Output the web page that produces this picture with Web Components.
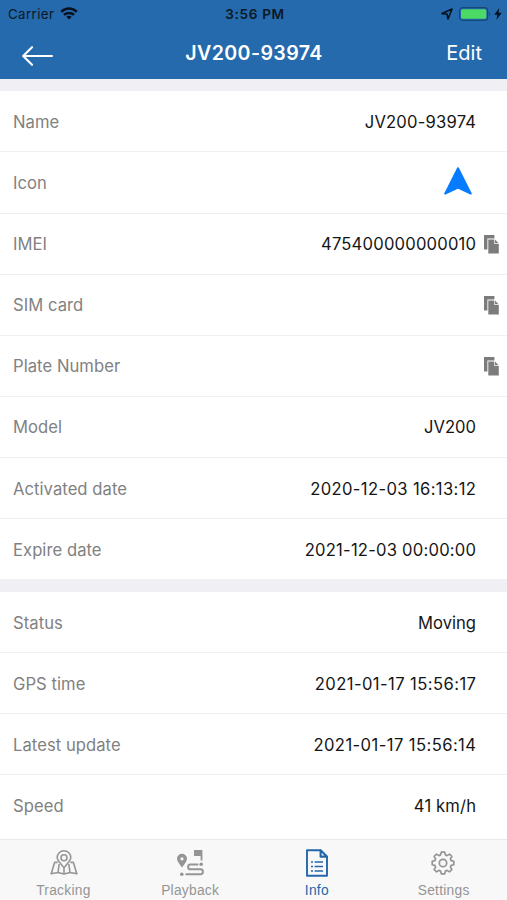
<!DOCTYPE html>
<html lang="en">
<head>
<meta charset="utf-8">
<title>Device info</title>
<style>
html,body{margin:0;height:100%;background:#f0f0f4}
</style>
</head>
<body>
<device-page></device-page>
<script>
const define = (name, html) => customElements.define(name, class extends HTMLElement {
  constructor(){ super(); this.attachShadow({mode:'open'}).innerHTML = html; }
});

define('status-bar', `<style>
:host{display:grid;grid-template-columns:1fr auto 1fr;align-items:center;height:27px;color:#0b1826;font-size:13.3px;padding:0 5px 0 8px}
.l{display:flex;align-items:center;gap:7px;letter-spacing:.4px}
.l svg{margin-left:-1px;margin-top:-1px}
.c{font-weight:600;font-size:13.6px;letter-spacing:.65px}
.r{display:flex;align-items:center;justify-content:flex-end}
svg{display:block}
</style>
<div class="l"><span>Carrier</span>
<svg width="18" height="13" viewBox="0 0 18 13" fill="none" stroke="#06121f" stroke-width="2.5"><path d="M1.2 4.8C5.6.5 12.4.5 16.8 4.8"/><path d="M4 7.9C6.8 5.2 11.2 5.2 14 7.9"/><path d="M9 12.5L6.3 9.8C7.8 8.4 10.2 8.4 11.7 9.8Z" fill="#06121f" stroke="none"/></svg></div>
<div class="c">3:56 PM</div>
<div class="r">
<svg width="12" height="12" viewBox="0 0 12 12" fill="none" stroke="#06121f" stroke-width="1.6" stroke-linejoin="round"><path d="M1 5.6L11 1L7 11L6 6Z"/></svg>
<svg style="margin-left:6px" width="33" height="14" viewBox="0 0 33 14"><rect x=".6" y=".7" width="28" height="12.6" rx="3" fill="none" stroke="#164779" stroke-width="1.2"/><rect x="2" y="2.2" width="25.3" height="9.6" rx="1.5" fill="#4cd964"/><path d="M30.3 4.6Q32.2 7 30.3 9.4Z" fill="#164779"/></svg>
<svg style="margin-left:2px" width="8" height="12" viewBox="0 0 8 12"><path d="M5.3 0L.2 6.8H3.4L2.4 12L7.7 4.8H4.5Z" fill="#06121f"/></svg></div>`);

define('nav-bar', `<style>
:host{display:grid;grid-template-columns:1fr auto 1fr;align-items:center;height:52px;color:#fff;padding:0 25px 0 22px}
h1{margin:0 0 0 4px;font-size:19.6px;font-weight:600;letter-spacing:.38px;line-height:50px}
.e{text-align:right;font-size:20px;line-height:50px}
svg{display:block;margin-top:5px}
</style>
<svg width="33" height="20" viewBox="0 0 33 20" fill="none" stroke="#fff" stroke-width="2.1" stroke-linecap="round" stroke-linejoin="round"><path d="M10 1.2L1.2 10L10 18.8M2 10H30"/></svg>
<h1><slot></slot></h1><div class="e">Edit</div>`);

define('info-group', `<style>:host{display:block;background:#fff}</style><slot></slot>`);

const copy = `<svg class="copy" width="15" height="19" viewBox="0 0 15 19"><path d="M0 0H10.4V3.4H3.4V14.4H0Z" fill="#7c7c7c"/><path d="M4.3 4.4H10.3V8.9H14.8V18.6H4.3Z" fill="#7c7c7c"/><path d="M11 4.6L14.6 8.2H11Z" fill="#7c7c7c"/></svg>`;

customElements.define('info-row', class extends HTMLElement {
  constructor(){
    super();
    this.attachShadow({mode:'open'}).innerHTML = `<style>
:host{display:grid;grid-template-columns:auto 1fr 31px;align-items:center;height:61.1px;box-sizing:border-box;border-bottom:1px solid #f0f0f0;padding:1px 0 0 13px;font-size:16.6px}
:host(:last-child){border-bottom:0;height:60px}
.k{color:#818181;letter-spacing:.06px}
.v{color:#151515;display:flex;justify-content:flex-end;text-align:right;letter-spacing:var(--track,.1px);margin-right:calc(0px - var(--track,.1px))}
:host([tabular]) .v{font-feature-settings:"tnum"}
::slotted(svg){display:block}
.copy{display:block;margin-left:8px}
</style><span class="k">${this.getAttribute('label')}</span><span class="v"><slot></slot></span>${this.hasAttribute('copy') ? copy : ''}`;
  }
});

customElements.define('tab-item', class extends HTMLElement {
  constructor(){
    super();
    this.attachShadow({mode:'open'}).innerHTML = `<style>
:host{flex:1;display:flex;flex-direction:column;align-items:center;color:#959595;font:13.8px/16px "Liberation Sans",Arial,sans-serif;letter-spacing:.25px}
:host([active]){color:#2367aa}
.i{height:30px;display:flex;align-items:center;margin-top:8px}
span{margin-top:5px}
</style><div class="i"><slot></slot></div><span>${this.getAttribute('label')}</span>`;
  }
});

define('tab-bar', `<style>:host{display:flex;height:61px;box-sizing:border-box;background:#f8f8f8;border-top:1px solid #e9e9e9}</style><slot></slot>`);

define('device-page', `<style>
:host{display:flex;flex-direction:column;height:900px;width:507px;overflow:hidden;background:#f0f0f4;font-family:Inter,"Liberation Sans",sans-serif}
header{background:#256aad;height:79px;flex:none;margin-bottom:12.4px}
main{flex:1;min-height:0;overflow:hidden;display:flex;flex-direction:column;gap:13px}
info-group{flex:none}
info-group:last-child{flex:1 0 auto}
svg{display:block}
</style>
<header><status-bar></status-bar><nav-bar>JV200-93974</nav-bar></header>
<main>
<info-group>
<info-row label="Name" style="--track:.2px">JV200-93974</info-row>
<info-row label="Icon"><svg style="margin-right:4px;margin-top:-4px" width="28" height="28" viewBox="0 0 28 28"><path d="M14 1.2L26.8 26.6L14 20.6L1.2 26.6Z" fill="#087cff" stroke="#087cff" stroke-width="2" stroke-linejoin="round"/></svg></info-row>
<info-row label="IMEI" copy style="--track:.2px">475400000000010</info-row>
<info-row label="SIM card" copy></info-row>
<info-row label="Plate Number" copy></info-row>
<info-row label="Model" style="--track:0px">JV200</info-row>
<info-row label="Activated date" style="--track:.37px">2020-12-03 16:13:12</info-row>
<info-row label="Expire date" style="--track:.22px">2021-12-03 00:00:00</info-row>
</info-group>
<info-group>
<info-row label="Status" style="--track:0px">Moving</info-row>
<info-row label="GPS time" style="--track:.42px">2021-01-17 15:56:17</info-row>
<info-row label="Latest update" style="--track:.42px">2021-01-17 15:56:14</info-row>
<info-row label="Speed" style="--track:.15px">41 km/h</info-row>
</info-group>
</main>
<tab-bar>
<tab-item label="Tracking"><svg style="margin-left:2px" width="28" height="26" viewBox="0 0 28 26" fill="none" stroke="#959595" stroke-width="1.6" stroke-linejoin="round"><path d="M14 17.5C10 13 7.2 10.5 7.2 7.6A6.8 6.8 0 0 1 20.8 7.6C20.8 10.5 18 13 14 17.5Z"/><circle cx="14" cy="7.7" r="3"/><path d="M7.8 12.4H4.6L1.2 23.8L8 22.5L14 24L20 22.5L26.8 23.8L23.4 12.4H20.2M9.2 14L8 22.5M18.8 14L20 22.5M14 17.5V24"/></svg></tab-item>
<tab-item label="Playback"><svg width="28" height="28" viewBox="0 0 28 28"><path d="M6 18.5C3 14.4 1 12.2 1 9.8A5 5 0 0 1 11 9.8C11 12.2 9 14.4 6 18.5Z" fill="#959595"/><circle cx="6" cy="9.8" r="1.6" fill="#f8f8f8"/><path d="M18 1H26.4V11.5H24.6V6.9H18Z" fill="#959595"/><circle cx="25.2" cy="15.3" r="1.8" fill="#959595"/><circle cx="5.8" cy="25.2" r="1.8" fill="#959595"/><path d="M22.3 15.5H14.5A2.4 2.4 0 0 0 14.5 20.3H24.5A2.4 2.4 0 0 1 24.5 25.2H9.5" fill="none" stroke="#959595" stroke-width="1.9"/></svg></tab-item>
<tab-item label="Info" active><svg width="22" height="28" viewBox="0 0 22 28" fill="none" stroke="#2367aa" stroke-width="1.9" stroke-linejoin="round"><path d="M1 1.2H14.5L21 7.7V26.8H1Z"/><path d="M14.5 1.2V7.7H21Z" fill="#2367aa"/><path d="M15.6 3.8V6.6H18.4Z" fill="#f8f8f8" stroke="none"/><path d="M5 13H7M8.6 13H17M5 17.5H7M8.6 17.5H17M5 22H7M8.6 22H17" stroke-width="1.7"/></svg></tab-item>
<tab-item label="Settings"><svg style="margin-right:2px;margin-top:-1px" width="24" height="24" viewBox="0 0 24 24" fill="none" stroke="#959595" stroke-width="1.7" stroke-linejoin="round"><circle cx="12" cy="12" r="3.7"/><path d="M10.3 1.2H13.7L14.4 3.9L16.1 4.6L18.5 3.1L20.9 5.5L19.4 7.9L20.1 9.6L22.8 10.3V13.7L20.1 14.4L19.4 16.1L20.9 18.5L18.5 20.9L16.1 19.4L14.4 20.1L13.7 22.8H10.3L9.6 20.1L7.9 19.4L5.5 20.9L3.1 18.5L4.6 16.1L3.9 14.4L1.2 13.7V10.3L3.9 9.6L4.6 7.9L3.1 5.5L5.5 3.1L7.9 4.6L9.6 3.9Z"/></svg></tab-item>
</tab-bar>`);
</script>
</body>
</html>
